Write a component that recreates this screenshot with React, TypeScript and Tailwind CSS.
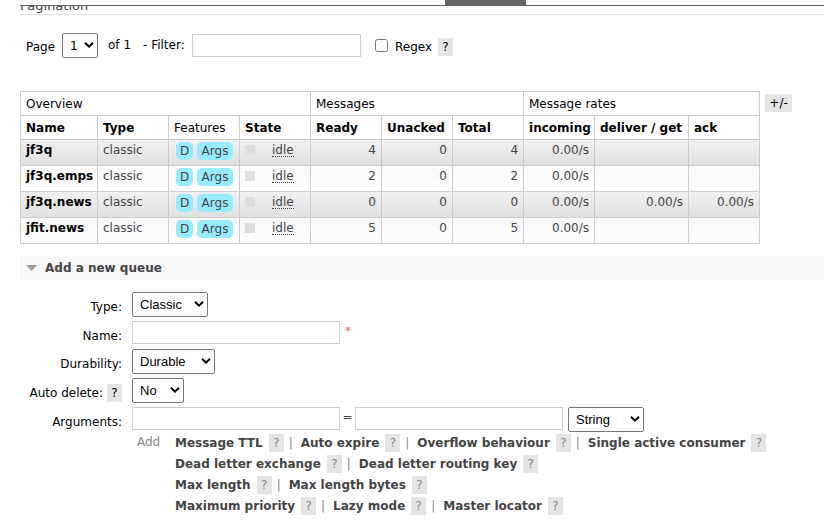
import { useState, type ReactNode } from "react";

type Queue = {
  name: string;
  ready: number;
  unacked: number;
  total: number;
  incoming: string;
  deliver: string;
  ack: string;
};

const queues: Queue[] = [
  { name: "jf3q", ready: 4, unacked: 0, total: 4, incoming: "0.00/s", deliver: "", ack: "" },
  { name: "jf3q.emps", ready: 2, unacked: 0, total: 2, incoming: "0.00/s", deliver: "", ack: "" },
  { name: "jf3q.news", ready: 0, unacked: 0, total: 0, incoming: "0.00/s", deliver: "0.00/s", ack: "0.00/s" },
  { name: "jfit.news", ready: 5, unacked: 0, total: 5, incoming: "0.00/s", deliver: "", ack: "" },
];

const argumentRows: string[][] = [
  ["Message TTL", "Auto expire", "Overflow behaviour", "Single active consumer"],
  ["Dead letter exchange", "Dead letter routing key"],
  ["Max length", "Max length bytes"],
  ["Maximum priority", "Lazy mode", "Master locator"],
];

const columns = ["Name", "Type", "Features", "State", "Ready", "Unacked", "Total", "incoming", "deliver / get", "ack"];

function Help({ label, className = "text-black" }: { label: string; className?: string }) {
  return (
    <button type="button" aria-label={label} className={`h-[18px] w-[15px] shrink-0 bg-[#e4e4e4] text-center leading-[18px] ${className}`}>
      ?
    </button>
  );
}

function Select({ id, options, className, label }: { id: string; options: string[]; className: string; label?: string }) {
  return (
    <span className={`relative inline-block h-[25px] ${className}`}>
      <select
        id={id}
        aria-label={label}
        className="block h-full w-full appearance-none rounded-[2px] border border-[#767676] bg-white pl-[7px] text-black outline-none"
      >
        {options.map((option) => (
          <option key={option}>{option}</option>
        ))}
      </select>
      <svg className="pointer-events-none absolute right-[4px] top-[8px]" width="10" height="8" viewBox="0 0 10 8" fill="none" aria-hidden="true">
        <path d="M1 1.8 L5 5.6 L9 1.8" stroke="#000" strokeWidth="2" />
      </svg>
    </span>
  );
}

function Field({ id, label, help, tall = true, children }: { id: string; label: string; help?: boolean; tall?: boolean; children: ReactNode }) {
  return (
    <div className={`flex items-start ${tall ? "h-[25px]" : "h-6"}`}>
      <div className="flex w-[102px] shrink-0 items-center justify-end gap-1 pt-1.5 leading-[18px]">
        <label htmlFor={id}>{label}</label>
        {help && <Help label={`Help: ${label}`} />}
      </div>
      <div className="ml-2.5 flex items-start">{children}</div>
    </div>
  );
}

const textBox = "h-[23px] border border-[#ccc] bg-white px-1 outline-none";
const cell = "border border-[#ccc] px-[5px]";

export default function App() {
  const [regex, setRegex] = useState(false);

  return (
    <div className="h-screen overflow-hidden bg-white pl-5 font-['DejaVu_Sans',Verdana,sans-serif] text-[12px] text-black">
      <nav className="h-1.5 border-b border-[#666]">
        <div className="ml-[425px] h-[5px] w-[81px] bg-[#666]" />
      </nav>
      <header className="flex h-[9px] items-end overflow-hidden border-b border-[#e4e4e4]">
        <h2 className="text-[13px] leading-4 text-[#444]">Pagination</h2>
      </header>

      <div className="flex items-start pl-1.5 pt-[18px] leading-[18px]">
        <label htmlFor="page" className="w-9 pt-[5px]">Page</label>
        <Select id="page" options={["1"]} className="w-9" />
        <span className="ml-2.5 w-[35px] pt-[3px]">of 1</span>
        <label htmlFor="filter" className="w-[49px] whitespace-nowrap pt-[3px]">- Filter:</label>
        <input id="filter" type="text" className={`mt-px w-[169px] ${textBox}`} />
        <input
          id="regex"
          type="checkbox"
          checked={regex}
          onChange={(e) => setRegex(e.target.checked)}
          className="ml-3.5 mt-1.5 size-[13px]"
        />
        <label htmlFor="regex" className="ml-[7px] w-[43px] pt-[5px]">Regex</label>
        <div className="pt-[5px]">
          <Help label="Help: Regex" />
        </div>
      </div>

      <div className="mt-[33px] flex items-start gap-[5px]">
        <table className="w-[740px] table-fixed border-collapse leading-4">
          <colgroup>
            <col className="w-[77px]" />
            <col className="w-[71px]" />
            <col className="w-[71px]" />
            <col className="w-[71px]" />
            <col className="w-[71px]" />
            <col className="w-[71px]" />
            <col className="w-[71px]" />
            <col className="w-[71px]" />
            <col className="w-[94px]" />
            <col className="w-[71px]" />
          </colgroup>
          <thead className="text-left">
            <tr className="h-6">
              <th colSpan={4} className={`${cell} font-normal`}>Overview</th>
              <th colSpan={3} className={`${cell} font-normal`}>Messages</th>
              <th colSpan={3} className={`${cell} font-normal`}>Message rates</th>
            </tr>
            <tr className="h-6">
              {columns.map((column) => (
                <th key={column} className={`${cell} whitespace-nowrap pt-px ${column === "Features" ? "font-normal" : "font-bold"}`}>
                  {column}
                </th>
              ))}
            </tr>
          </thead>
          <tbody className="text-[#444]">
            {queues.map((queue, index) => (
              <tr key={queue.name} className={`h-[26px] align-top ${index % 2 === 0 ? "bg-linear-to-b from-[#f0f0f0] to-[#dfdfdf]" : "bg-linear-to-b from-[#f7f7f7] to-white"}`}>
                <td className={`${cell} pt-0.5`}>
                  <a href="#queue" className="font-bold text-black">{queue.name}</a>
                </td>
                <td className={`${cell} pt-0.5`}>classic</td>
                <td className={`${cell} pt-0.5`}>
                  <div className="flex gap-1 pl-0.5">
                    <span className="h-[18px] w-[17px] rounded-[5px] bg-[#98ebff] text-center leading-[18px]">D</span>
                    <span className="h-[18px] w-9 rounded-[5px] bg-[#98ebff] text-center leading-[18px]">Args</span>
                  </div>
                </td>
                <td className={`${cell} pt-0.5`}>
                  <div className="flex items-start">
                    <span className="mt-[3px] size-2.5 bg-[#ddd]" />
                    <abbr title="idle" className="ml-[17px] h-[15px] border-b border-dotted border-[#444] no-underline">idle</abbr>
                  </div>
                </td>
                {[queue.ready, queue.unacked, queue.total, queue.incoming, queue.deliver, queue.ack].map((value, i) => (
                  <td key={i} className={`${cell} pt-0.5 text-right`}>{value}</td>
                ))}
              </tr>
            ))}
          </tbody>
        </table>
        <button type="button" className="mt-[3px] h-[18px] w-[27px] bg-[#e4e4e4] leading-[18px]">+/-</button>
      </div>

      <h2 className="mt-3 h-6 bg-[#f8f8f8] font-bold leading-6 text-[#444]">
        <button type="button" className="flex items-center gap-2 pl-1.5">
          <svg width="11" height="6" viewBox="0 0 11 6" aria-hidden="true">
            <path d="M0 0h11L5.500 6z" fill="#999" />
          </svg>
          Add a new queue
        </button>
      </h2>

      <form className="mt-3 flex flex-col gap-1" onSubmit={(e) => e.preventDefault()}>
        <Field id="type" label="Type:">
          <Select id="type" options={["Classic", "Quorum"]} className="w-[76px] font-['Liberation_Sans',Arial,sans-serif] text-[13px]" />
        </Field>
        <Field id="name" label="Name:" tall={false}>
          <input id="name" type="text" className={`w-[208px] ${textBox}`} />
          <span className="ml-[5px] leading-5 text-[#f66]">*</span>
        </Field>
        <Field id="durability" label="Durability:">
          <Select id="durability" options={["Durable", "Transient"]} className="w-[83px] font-['Liberation_Sans',Arial,sans-serif] text-[13px]" />
        </Field>
        <Field id="auto-delete" label="Auto delete:" help>
          <Select id="auto-delete" options={["No", "Yes"]} className="w-[52px] font-['Liberation_Sans',Arial,sans-serif] text-[13px]" />
        </Field>
        <Field id="argument-key" label="Arguments:">
          <input id="argument-key" type="text" className={`w-[208px] ${textBox}`} />
          <span className="w-[15px] text-center leading-5 text-[#444]">=</span>
          <input aria-label="Argument value" type="text" className={`w-[208px] ${textBox}`} />
          <Select id="argument-type" label="Argument type" options={["String", "Number", "Boolean", "List"]} className="ml-[5px] w-[76px] font-['Liberation_Sans',Arial,sans-serif] text-[13px]" />
        </Field>

        <div className="-mt-0.5 flex pl-[117px] leading-[18px] text-[#888]">
          <span className="w-[38px] shrink-0 leading-4">Add</span>
          <div className="flex flex-col gap-[3px]">
            {argumentRows.map((row) => (
              <div key={row[0]} className="flex whitespace-nowrap">
                {row.map((name, i) => (
                  <span key={name} className="flex">
                    {i > 0 && <span className="w-[17px] pl-[5px]">|</span>}
                    <button type="button" className="mr-1.5 font-bold text-[#444]">{name}</button>
                    <Help label={`Help: ${name}`} className="text-[#888]" />
                  </span>
                ))}
              </div>
            ))}
          </div>
        </div>
      </form>
    </div>
  );
}
